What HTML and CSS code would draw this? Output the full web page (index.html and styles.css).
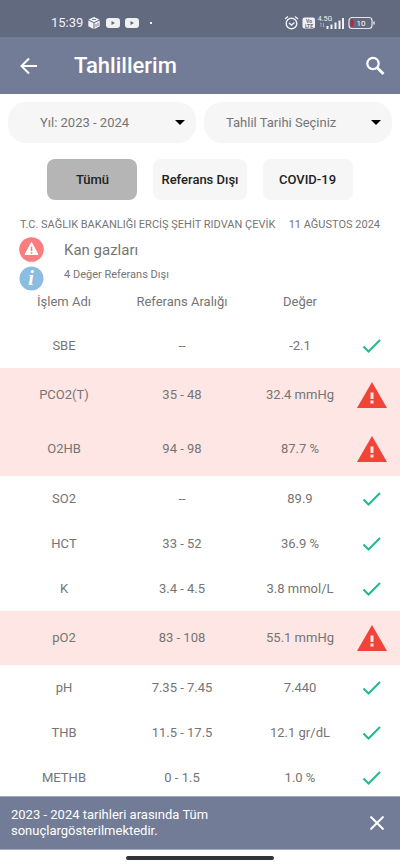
FILE: index.html
```
<!DOCTYPE html>
<html lang="tr">
<head>
<meta charset="utf-8">
<meta name="viewport" content="width=device-width, initial-scale=1">
<title>Tahlillerim</title>
<link rel="stylesheet" href="styles.css">
</head>
<body>
<svg class="defs" aria-hidden="true">
  <symbol id="check" viewBox="0 0 20 16"><path d="M1.500 8.500 6.500 13.500 18 2" fill="none" stroke="#22b894" stroke-width="2"/></symbol>
  <symbol id="warn" viewBox="0 0 30 26"><path d="M15 0 30 26H0Z" fill="#f04438"/><path d="M13.500 10.500h3v6.500h-3zM13.500 18.500h3v3h-3z" fill="#fee6e4"/></symbol>
  <symbol id="video" viewBox="0 0 14 10"><rect width="14" height="10" rx="3" fill="#f0f1f5"/><path d="M5.500 3v4L9 5z" fill="#626a80"/></symbol>
</svg>
<div class="status">
  <span class="time">15:39</span>
  <svg class="cube" width="12" height="12" viewBox="0 0 12 12"><path d="M6 0 11.500 2.500 6 5.200.5 2.500zM.3 3.500 5.500 6v6L.3 9.300zM11.700 3.500 6.500 6v6l5.200-2.700z" fill="#f0f1f5"/><path d="M4 2.500h4M8 7v3M10 6v3" stroke="#626a80" stroke-width=".8"/></svg>
  <svg class="video" width="14" height="10"><use href="#video"/></svg>
  <svg class="video" width="14" height="10"><use href="#video"/></svg>
  <span class="dot"></span>
  <span class="spacer"></span>
  <svg width="92" height="16" viewBox="0 0 92 16">
    <g fill="none" stroke="#f0f1f5" stroke-width="1.400"><circle cx="7.500" cy="8.500" r="5.300"/><path d="M1 4 4 1.500M11 1.500l3 2.500M5 8l2.500 2 3-2.500"/></g>
    <rect x="18.500" y="2.500" width="12.500" height="11" rx="2" fill="#f0f1f5"/>
    <text x="25" y="8" class="tiny dark">Vo</text>
    <text x="25" y="13" class="tiny dark">LTE</text>
    <text x="41" y="6" class="net">4.5G</text>
    <path d="M37 8v4M36 9l1-1M39.500 8v4M40.500 11l-1 1" stroke="#b9bdca" stroke-width=".7" fill="none"/>
    <path d="M43.500 11v3M47.500 9.500V14M51.500 7.500V14M55.500 5.500V14M59 3v11" stroke="#f0f1f5" stroke-width="2"/>
    <rect x="65" y="2.500" width="23" height="11" rx="3" fill="none" stroke="#e4e5eb" stroke-width="1.200"/>
    <rect x="66.500" y="4.500" width="3" height="7" rx="1" fill="#b3293c"/>
    <path d="M90 6.500v3" stroke="#e4e5eb" stroke-width="1.500"/>
    <text x="77" y="11" class="level">10</text>
  </svg>
</div>
<header class="appbar">
  <button class="icon-btn" aria-label="Geri"><svg width="18" height="18" viewBox="0 0 18 18"><path d="M17 9H2M9 1.500 1.500 9 9 16.500" fill="none" stroke="#fff" stroke-width="2"/></svg></button>
  <h1>Tahlillerim</h1>
  <button class="icon-btn" aria-label="Ara"><svg width="20" height="20" viewBox="0 0 20 20"><circle cx="8" cy="7.500" r="5.700" fill="none" stroke="#fff" stroke-width="2.200"/><path d="M12 11.500 18.500 18" stroke="#fff" stroke-width="2.800"/></svg></button>
</header>
<main>
  <div class="filters">
    <div class="select">
      <select class="year" aria-label="Yıl"><option>Yıl: 2023 - 2024</option></select>
      <svg class="caret" width="10" height="5" viewBox="0 0 10 5"><path d="M0 0h10L5 5z"/></svg>
    </div>
    <div class="select">
      <select class="date" aria-label="Tahlil Tarihi"><option>Tahlil Tarihi Seçiniz</option></select>
      <svg class="caret" width="10" height="5" viewBox="0 0 10 5"><path d="M0 0h10L5 5z"/></svg>
    </div>
  </div>
  <div class="tabs">
    <button class="tab active">Tümü</button>
    <button class="tab">Referans Dışı</button>
    <button class="tab">COVID-19</button>
  </div>
  <section>
    <div class="place"><span>T.C. SAĞLIK BAKANLIĞI ERCİŞ ŞEHİT RIDVAN ÇEVİK</span><time datetime="2024-08-11">11 AĞUSTOS 2024</time></div>
    <div class="line">
      <svg width="25" height="25" viewBox="0 0 25 25"><circle cx="12.500" cy="12.500" r="12.300" fill="#fd7c80"/><path d="M12.500 5.500 19 17.500H6Z" fill="#fff" stroke="#fff" stroke-linejoin="round"/><path d="M12.500 9.500v4.500M12.500 15v1.800" stroke="#fd7c80" stroke-width="1.500"/></svg>
      <h2>Kan gazları</h2>
    </div>
    <div class="line info">
      <svg width="25" height="25" viewBox="0 0 25 25"><circle cx="12.500" cy="12.500" r="12" fill="#8cbde0"/><text x="12" y="19" class="i">i</text></svg>
      <p>4 Değer Referans Dışı</p>
    </div>
    <table>
      <thead><tr><th class="name">İşlem Adı</th><th class="range">Referans Aralığı</th><th class="value">Değer</th><td></td></tr></thead>
      <tbody>
        <tr><td>SBE</td><td>--</td><td>-2.1</td><td><svg class="ok"><use href="#check"/></svg></td></tr>
        <tr class="out"><td>PCO2(T)</td><td>35 - 48</td><td>32.4 mmHg</td><td><svg class="bad"><use href="#warn"/></svg></td></tr>
        <tr class="out"><td>O2HB</td><td>94 - 98</td><td>87.7 %</td><td><svg class="bad"><use href="#warn"/></svg></td></tr>
        <tr><td>SO2</td><td>--</td><td>89.9</td><td><svg class="ok"><use href="#check"/></svg></td></tr>
        <tr><td>HCT</td><td>33 - 52</td><td>36.9 %</td><td><svg class="ok"><use href="#check"/></svg></td></tr>
        <tr><td>K</td><td>3.4 - 4.5</td><td>3.8 mmol/L</td><td><svg class="ok"><use href="#check"/></svg></td></tr>
        <tr class="out"><td>pO2</td><td>83 - 108</td><td>55.1 mmHg</td><td><svg class="bad"><use href="#warn"/></svg></td></tr>
        <tr><td>pH</td><td>7.35 - 7.45</td><td>7.440</td><td><svg class="ok"><use href="#check"/></svg></td></tr>
        <tr><td>THB</td><td>11.5 - 17.5</td><td>12.1 gr/dL</td><td><svg class="ok"><use href="#check"/></svg></td></tr>
        <tr><td>METHB</td><td>0 - 1.5</td><td>1.0 %</td><td><svg class="ok"><use href="#check"/></svg></td></tr>
      </tbody>
    </table>
  </section>
</main>
<div class="banner" role="status">
  <p>2023 - 2024 tarihleri arasında Tüm<br>sonuçlargösterilmektedir.</p>
  <button class="icon-btn" aria-label="Kapat"><svg width="14" height="14" viewBox="0 0 14 14"><path d="M.5.5l13 13M13.500.5l-13 13" stroke="#fff" stroke-width="2"/></svg></button>
</div>
<div class="navbar"><span class="handle"></span></div>
</body>
</html>
```
FILE: styles.css
```
* { box-sizing: border-box; }
body {
  margin: 0;
  height: 100vh;
  display: flex;
  flex-direction: column;
  background: #fff;
  color: #757575;
  font: 13px/16px Roboto, sans-serif;
}
h1, h2, p { margin: 0; font-weight: 400; }
button, select { font: inherit; border: 0; margin: 0; }
svg { display: block; flex: none; }
.defs { position: absolute; width: 0; height: 0; }

.status {
  flex: none;
  height: 37px;
  padding: 9px 24px 0 51px;
  display: flex;
  align-items: center;
  background: #626a80;
  color: #f0f1f5;
}
.time { margin-right: 5px; }
.cube { margin-right: 6px; }
.video { margin-right: 5px; }
.dot { width: 2px; height: 2px; margin-left: 6px; background: #f0f1f5; }
.spacer { flex: 1; }
.tiny { font: 700 5px Roboto, sans-serif; text-anchor: middle; }
.dark { fill: #626a80; }
.net { font: 7px Roboto, sans-serif; text-anchor: middle; fill: #f0f1f5; }
.level { font: 8px Roboto, sans-serif; text-anchor: middle; fill: #fff; }

.appbar {
  flex: none;
  height: 57px;
  padding: 0 15px 0 20px;
  display: flex;
  align-items: center;
  background: #727c96;
  color: #fff;
}
.appbar h1 { flex: 1; margin-left: 36px; font-size: 22px; line-height: 28px; font-weight: 500; }
.icon-btn { padding: 0; background: none; color: inherit; }

main { flex: 1; min-height: 0; overflow: hidden; padding-top: 8px; }
.filters { display: flex; gap: 8px; padding: 0 8px; }
.select { position: relative; flex: 1; }
.select select {
  appearance: none;
  display: block;
  width: 100%;
  height: 41px;
  border-radius: 18px;
  background: #f6f6f6;
  color: #757575;
}
.year { padding: 0 32px; }
.date { padding: 0 22px; }
.caret { position: absolute; right: 11px; top: 18px; pointer-events: none; }

.tabs { display: flex; justify-content: center; gap: 16px; padding: 16px 0 17px; }
.tab {
  min-width: 90px;
  height: 41px;
  padding: 0 8px;
  border-radius: 8px;
  background: #f6f6f6;
  color: #222;
  font-weight: 500;
}
.active { background: #b5b5b5; }

.place { display: flex; justify-content: space-between; padding: 0 20px; font-size: 11px; white-space: nowrap; }
.line { display: flex; align-items: center; gap: 20px; margin-top: 4px; padding: 0 19px; }
.line h2 { font-size: 15px; line-height: 20px; }
.info { align-items: flex-start; font-size: 11px; }
.info p { padding-top: 1px; }
.i { font: italic 700 20px "Liberation Serif", serif; text-anchor: middle; fill: #fff; }

table { width: 100%; table-layout: fixed; border-collapse: collapse; }
th, td { padding: 0 0 0 2px; text-align: center; font-weight: 400; }
th:first-child, td:first-child { padding-left: 6px; }
td:last-child { padding-right: 16px; }
.name { width: 30.5%; }
.range, .value { width: 29.5%; }
thead tr { height: 32px; }
thead th { padding-top: 3px; vertical-align: top; }
tbody tr { height: 45px; }
tbody tr.out { height: 54px; background: #fee6e4; }
.ok { width: 20px; height: 16px; margin: 0 auto; }
.bad { width: 30px; height: 26px; margin: 0 -3px; }

.banner {
  flex: none;
  display: flex;
  align-items: center;
  justify-content: space-between;
  height: 54px;
  padding: 0 16px 0 11px;
  background: #727c96;
  border: solid #a5abbc;
  border-width: 1px 0;
  color: #fff;
}
.navbar { flex: none; height: 16px; display: flex; align-items: center; justify-content: center; }
.handle { width: 37%; height: 4px; border-radius: 2px; background: #303436; }
```
